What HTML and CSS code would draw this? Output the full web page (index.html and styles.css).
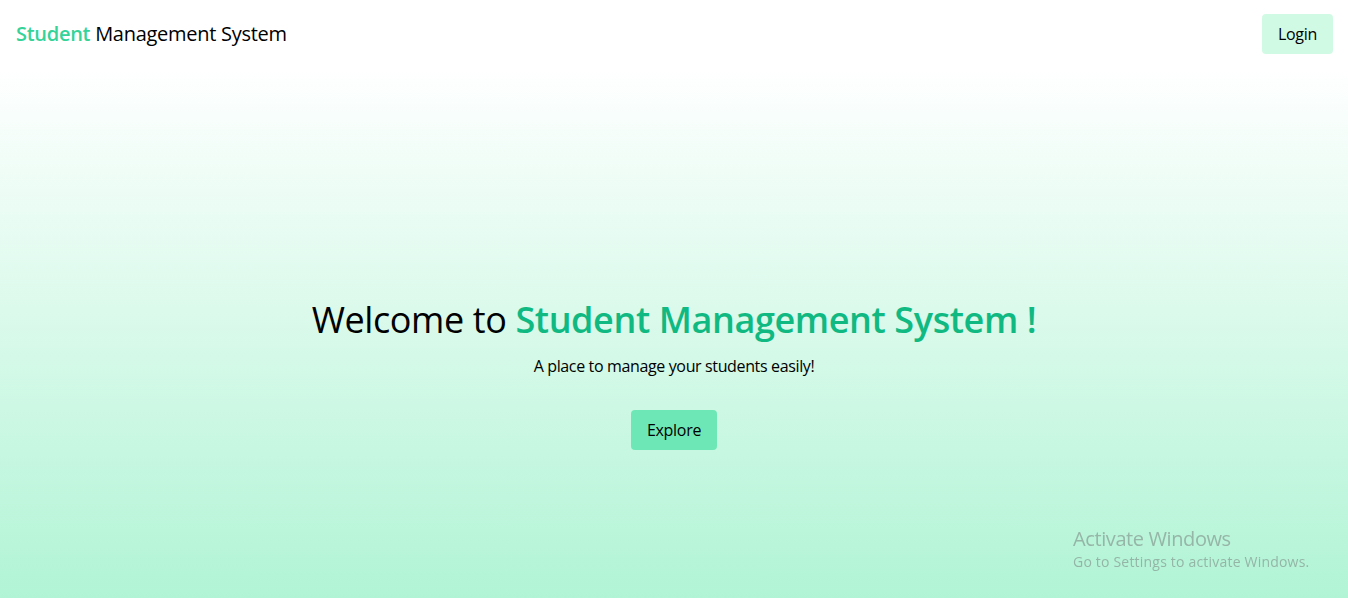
FILE: index.html
```html
<!DOCTYPE html>
<html lang="en">
<head>
<meta charset="utf-8">
<title>Student Management System</title>
<link rel="stylesheet" href="styles.css">
</head>
<body>
  <header class="navbar">
    <div class="brand"><span class="brand-accent">Student</span> Management System</div>
    <button class="btn btn-login">Login</button>
  </header>
  <main class="hero">
    <h1 class="hero-title">Welcome to <span class="hero-accent">Student Management System !</span></h1>
    <p class="hero-sub">A place to manage your students easily!</p>
    <button class="btn btn-explore">Explore</button>
  </main>
  <div class="watermark">
    <div class="wm-title">Activate Windows</div>
    <div class="wm-sub">Go to Settings to activate Windows.</div>
  </div>
</body>
</html>
```
FILE: styles.css
```css
* { box-sizing: border-box; }
html, body { margin: 0; padding: 0; }
body {
  font-family: "Open Sans", "Noto Sans", sans-serif;
  color: #000;
  background: #fff;
  overflow: hidden;
}
.navbar {
  height: 68px;
  display: flex;
  align-items: center;
  justify-content: space-between;
  padding: 0 15px 0 16px;
  background: #fff;
}
.brand {
  font-size: 20px;
  line-height: 28px;
  letter-spacing: -0.28px;
}
.brand-accent {
  color: #34d399;
  font-weight: 600;
}
.btn {
  font-family: inherit;
  font-size: 16px;
  line-height: 24px;
  letter-spacing: -0.3px;
  border: none;
  border-radius: 4px;
  padding: 8px 16px;
  color: #000;
  cursor: pointer;
}
.btn-login { background: #d1fae5; }
.hero {
  height: 530px;
  display: flex;
  flex-direction: column;
  align-items: center;
  justify-content: center;
  padding-top: 84px;
  background: linear-gradient(to bottom, #ffffff, #b1f4d5);
}
.hero-title {
  margin: 0;
  font-size: 36px;
  line-height: 40px;
  font-weight: 400;
  letter-spacing: -0.4px;
}
.hero-accent {
  color: #10b981;
  font-weight: 600;
}
.hero-sub {
  margin: 14px 0 0;
  font-size: 16px;
  line-height: 24px;
  letter-spacing: -0.36px;
}
.btn-explore {
  margin-top: 32px;
  background: #6ee7b7;
}
.watermark {
  position: fixed;
  left: 1073px;
  top: 526px;
  color: rgba(120, 130, 125, 0.55);
  pointer-events: none;
}
.wm-title { font-size: 20px; line-height: 26px; letter-spacing: -0.4px; }
.wm-sub { font-size: 14px; line-height: 20px; letter-spacing: 0.2px; }
```
